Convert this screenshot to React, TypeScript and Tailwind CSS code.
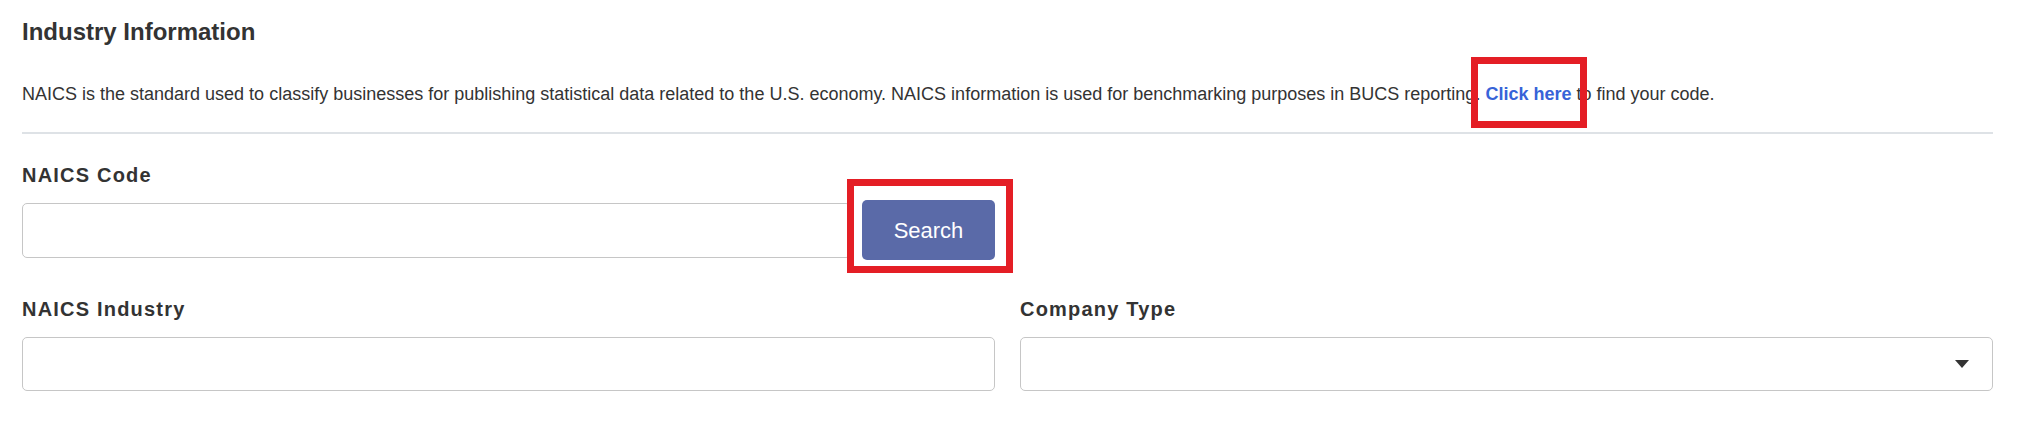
import React from "react";

export default function App() {
  return (
    <div
      className="relative w-full h-[433px] bg-white pl-[22px] pr-[27px] pt-[18px] text-[#333333]"
      style={{ fontFamily: '"Liberation Sans", Arial, sans-serif' }}
    >
      <h2 className="text-[24px] leading-[28px] font-bold">Industry Information</h2>
      <p className="mt-[36px] text-[18px] leading-[24px]">
        NAICS is the standard used to classify businesses for publishing statistical data related to the U.S. economy. NAICS
        information is used for benchmarking purposes in BUCS reporting.{" "}
        <a href="#" className="font-bold text-[#3763d8]">
          Click here
        </a>{" "}
        to find your code.
      </p>
      <div className="mt-[26px] h-[2px] bg-[#dee2e6]" />

      <div className="grid grid-cols-2 gap-x-[25px]">
        <div>
          <label className="mt-[29px] mb-[13px] block text-[20px] leading-[24px] font-bold tracking-[1.2px]">
            NAICS Code
          </label>
          <div className="flex items-center gap-[11px] h-[60px]">
            <input
              type="text"
              className="flex-1 h-[55px] rounded-[5px] border border-[#c6c6c6] bg-white px-3 outline-none"
            />
            <button className="w-[133px] h-[60px] rounded-[5px] bg-[#5a6aa8] text-white text-[22px]">Search</button>
          </div>
        </div>
        <div />
        <div>
          <label className="mt-[37px] mb-[16px] block text-[20px] leading-[24px] font-bold tracking-[1.2px]">
            NAICS Industry
          </label>
          <input
            type="text"
            className="w-full h-[54px] rounded-[5px] border border-[#c6c6c6] bg-white px-3 outline-none"
          />
        </div>
        <div>
          <label className="mt-[37px] mb-[16px] block text-[20px] leading-[24px] font-bold tracking-[1.2px]">
            Company Type
          </label>
          <div className="flex items-center justify-end w-full h-[54px] rounded-[5px] border border-[#c6c6c6] bg-white pr-[23px]">
            <svg width="14" height="8" viewBox="0 0 14 8">
              <path d="M0 0 L14 0 L7 8 Z" fill="#333333" />
            </svg>
          </div>
        </div>
      </div>

      <div className="absolute left-[1471px] top-[57px] w-[116px] h-[71px] border-[7px] border-[#e41e25] pointer-events-none" />
      <div className="absolute left-[847px] top-[179px] w-[166px] h-[94px] border-[7px] border-[#e41e25] pointer-events-none" />
    </div>
  );
}
